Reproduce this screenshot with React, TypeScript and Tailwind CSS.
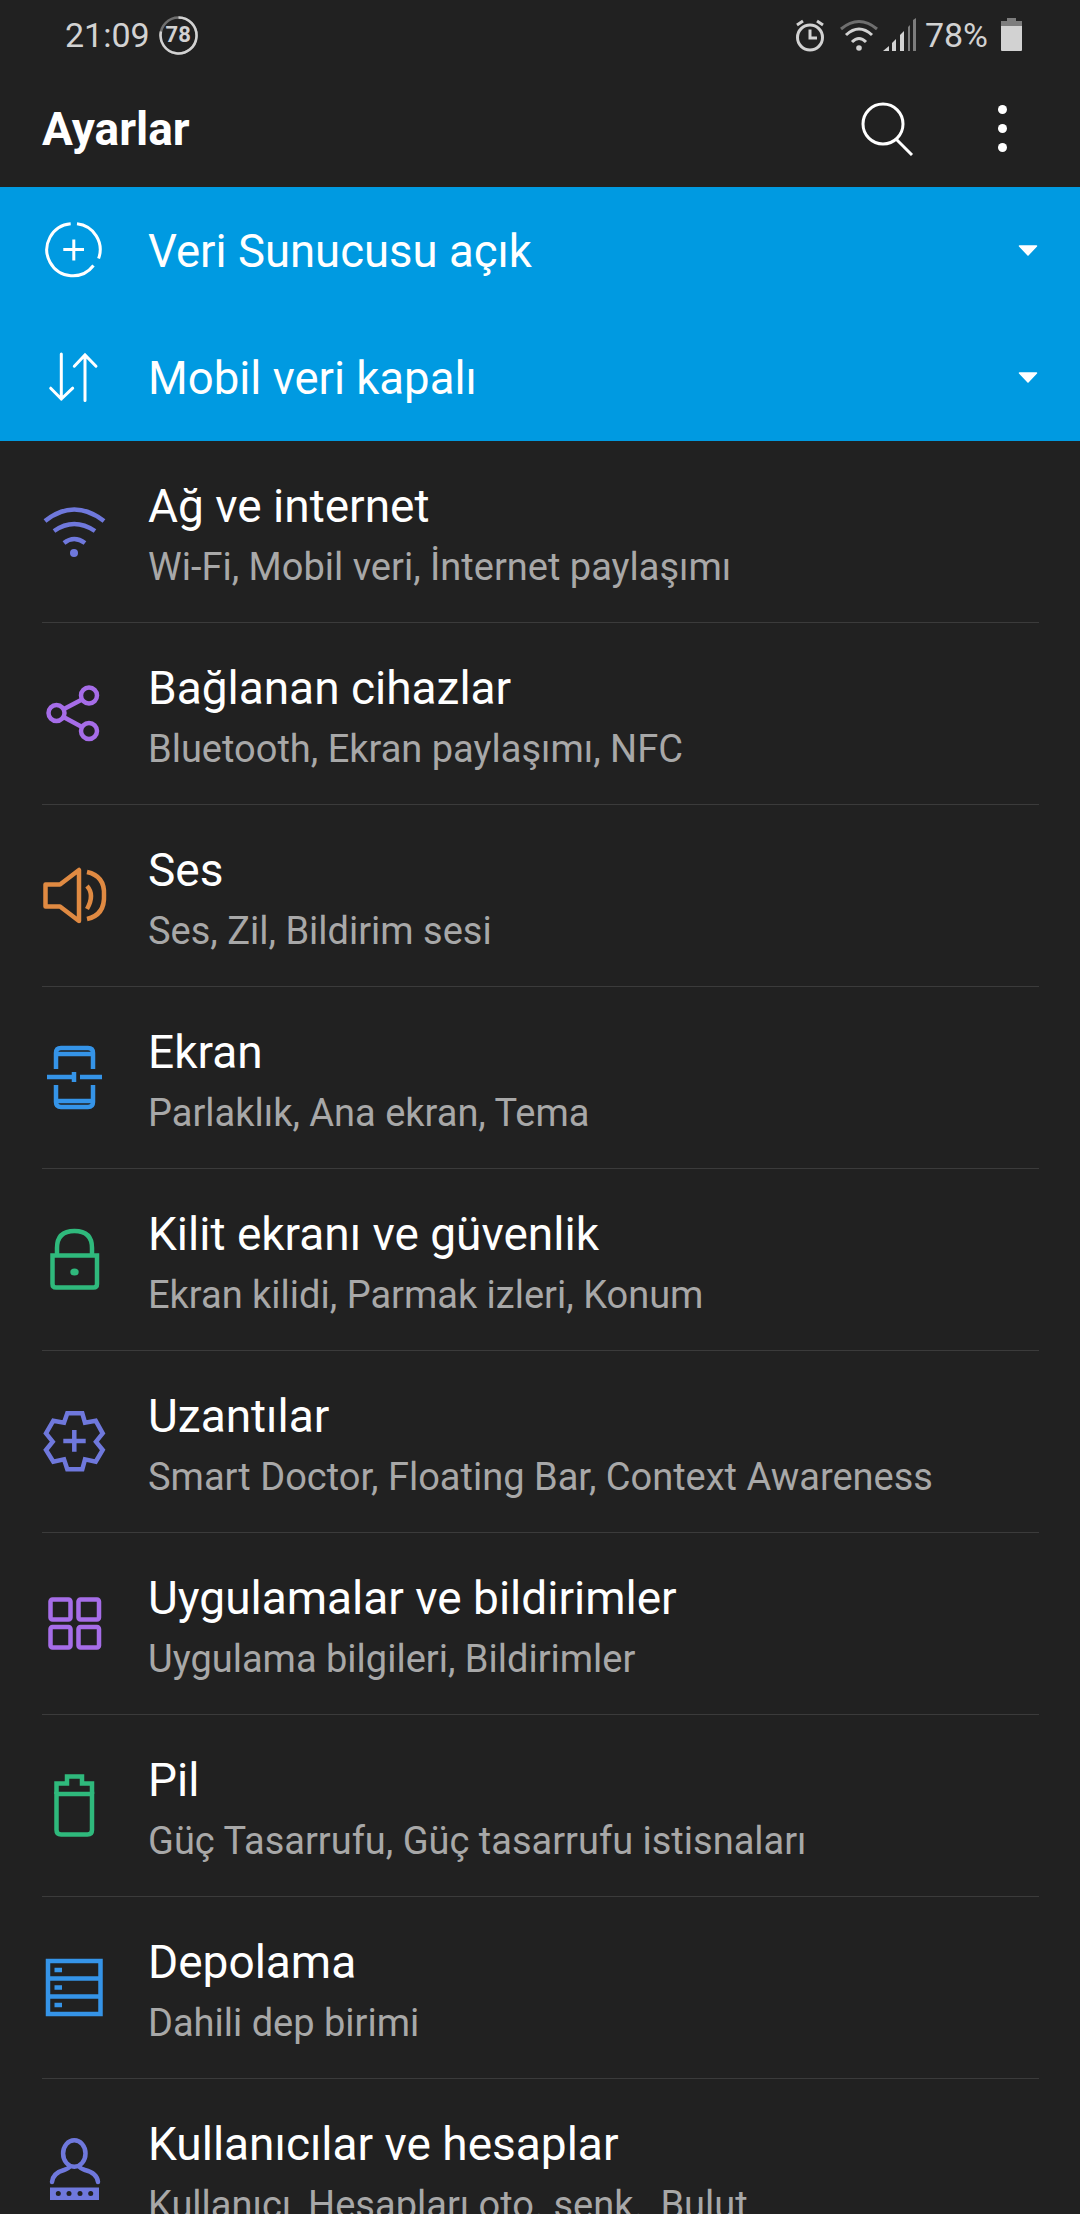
import type { ReactNode } from "react";

const iconProps = {
  width: 78,
  height: 78,
  viewBox: "0 0 78 78",
  fill: "none",
  strokeWidth: 4.5,
};

const WifiIcon = () => (
  <svg {...iconProps} stroke="#6f78dc">
    <path d="M10 28Q39 5 69 28" />
    <path d="M19 38Q39 24 60 38" />
    <path d="M29 50Q39 42 50 50" />
    <circle cx="39" cy="60" r="4" fill="#6f78dc" stroke="none" />
  </svg>
);

const ShareIcon = () => (
  <svg {...iconProps} stroke="#a66de8">
    <circle cx="54" cy="20.5" r="8" />
    <circle cx="21.5" cy="38" r="8" />
    <circle cx="54" cy="56" r="8" />
    <path d="M28.5 34.2L47 24.5M28.5 42L47 52" />
  </svg>
);

const SoundIcon = () => (
  <svg {...iconProps} stroke="#e08a42">
    <path d="M10.5 27.5H25L44 13V64L25 49.5H10.5Z" strokeLinejoin="round" />
    <path d="M52 29Q60 38 52 52" />
    <path d="M52 15Q70 19 69 38Q70 58 52 62" />
  </svg>
);

const ScreenIcon = () => (
  <svg {...iconProps} stroke="#3594e8">
    <path d="M21 30V14Q21 9 26 9H53Q58 9 58 14V30" />
    <path d="M21 46V63Q21 68 26 68H53Q58 68 58 63V46" />
    <path d="M21 15H58M21 62H58" />
    <path d="M12 38H38M45 38H67" />
    <path d="M39 33V43" />
  </svg>
);

const LockIcon = () => (
  <svg {...iconProps} stroke="#2fb97c">
    <path d="M22 33V27Q22 10 39.5 10Q57 10 57 27V33" />
    <path d="M17.5 34.5H62V63Q62 66.5 58.5 66.5H21Q17.5 66.5 17.5 63Z" />
    <ellipse cx="39.5" cy="51" rx="4.2" ry="3.6" fill="#2fb97c" stroke="none" />
  </svg>
);

const GearIcon = () => (
  <svg {...iconProps} stroke="#6f78dc">
    <path d="M32.3 10.3H47.3L50 19.7L60.7 17.7L67.7 30.3L61 38.7L67.7 47L60.7 58.7L50 56.3L47.3 66.3H32.3L29 56.3L18.3 58.7L11 47L17.7 38.7L11 30.3L18.3 17.7L29 19.7Z" />
    <path d="M28.3 38H50.7M39.3 27V48.7" />
  </svg>
);

const AppsIcon = () => (
  <svg {...iconProps} stroke="#a66de8">
    <rect x="15.5" y="14.5" width="20" height="20" rx="2" />
    <rect x="43.5" y="14.5" width="20.5" height="20" rx="2" />
    <rect x="15.5" y="42" width="20" height="20.5" rx="2" />
    <rect x="43.5" y="42" width="20.5" height="20.5" rx="2" />
  </svg>
);

const BatteryIcon = () => (
  <svg {...iconProps} stroke="#2fb97c">
    <path d="M21.5 27V16.5H32V9.5H47V16.5H57V27" />
    <path d="M21.5 27H57V63Q57 67.5 52.5 67.5H26Q21.5 67.5 21.5 63Z" />
  </svg>
);

const StorageIcon = () => (
  <svg {...iconProps} stroke="#3594e8">
    <rect x="13" y="12" width="52.5" height="53" />
    <path d="M13 29.5H65.5M13 47.5H65.5" />
    <path d="M19.5 21H27M19.5 38.5H27M19.5 56H27" />
  </svg>
);

const UserIcon = () => (
  <svg {...iconProps} stroke="#6f78dc">
    <ellipse cx="39.3" cy="22.5" rx="11.2" ry="13.2" />
    <path d="M17 51Q18 42 29 39Q34 37.5 35 35M63 51Q62 42 50 39Q45 37.5 44 35" strokeLinecap="round" />
    <rect x="15" y="56.5" width="49" height="12.5" fill="#6f78dc" stroke="none" />
    <g fill="#212121" stroke="none">
      <circle cx="23.3" cy="62.5" r="2.5" />
      <circle cx="34" cy="62.5" r="2.5" />
      <circle cx="45" cy="62.5" r="2.5" />
      <circle cx="55.7" cy="62.5" r="2.5" />
    </g>
  </svg>
);

const DataSaverIcon = () => (
  <svg {...iconProps} stroke="#fff" strokeWidth="3">
    <path d="M42 11.8A26 26 0 0 1 63.6 46.5" />
    <path d="M58.5 53.5A26 26 0 1 1 35.7 11.8" />
    <path d="M28.3 37.5H49M38.8 27.5V48.5" />
  </svg>
);

const MobileDataIcon = () => (
  <svg {...iconProps} stroke="#fff" strokeWidth="3" strokeLinecap="round">
    <path d="M26.3 15V60M15.7 49.2L26.3 60L37.7 49.2" />
    <path d="M50 61.5V16M39.3 27.2L50 16L61 27.2" />
  </svg>
);

const Caret = () => (
  <svg width="20" height="11" viewBox="0 0 20 11" fill="#fff">
    <path d="M1.5 1H18.5L10 10Z" stroke="#fff" strokeWidth="1.5" strokeLinejoin="round" />
  </svg>
);

const AlarmIcon = () => (
  <svg width="30" height="34" viewBox="0 0 30 34" fill="none" stroke="#d2d2d2" strokeWidth="3">
    <circle cx="15" cy="19.5" r="12.5" />
    <path d="M15 11.5V20H22" />
    <path d="M2 7L8 3M28 7L22 3" strokeWidth="3" />
  </svg>
);

const StatusWifi = () => (
  <svg width="38" height="34" viewBox="0 0 38 34" fill="none" strokeWidth="3">
    <path d="M1 11Q19 -4 37 11" stroke="#6f6f6f" />
    <path d="M6 17Q19 5 32 17" stroke="#d2d2d2" />
    <path d="M12 24Q19 17 26 24" stroke="#d2d2d2" />
    <circle cx="19" cy="30" r="2.8" fill="#d2d2d2" stroke="none" />
  </svg>
);

const StatusSignal = () => (
  <svg width="34" height="34" viewBox="0 0 34 34">
    <path d="M0 33L6 28V33Z" fill="#d2d2d2" />
    <path d="M9 33V25L13 21V33Z" fill="#d2d2d2" />
    <path d="M17 33V17L21 13V33Z" fill="#d2d2d2" />
    <path d="M25 33V9L27 7V33Z" fill="#7d7d7d" />
    <path d="M30 33V2L33 0V33Z" fill="#7d7d7d" />
  </svg>
);

const StatusBattery = () => (
  <svg width="22" height="34" viewBox="0 0 22 34">
    <path d="M6 0H15V3H21V8H0V3H6Z" fill="#7d7d7d" />
    <path d="M0 8H21V32Q21 33 20 33H1Q0 33 0 32Z" fill="#d2d2d2" />
  </svg>
);

const LevelBadge = () => (
  <div className="relative flex h-[39px] w-[39px] items-center justify-center">
    <svg className="absolute inset-0" width="39" height="39" viewBox="0 0 39 39" fill="none" strokeWidth="2.5">
      <circle cx="19.5" cy="19.5" r="18" stroke="#6f6f6f" />
      <path d="M19.5 1.5A18 18 0 1 1 2 15.5" stroke="#d2d2d2" />
    </svg>
    <span className="text-[22px] font-bold leading-none text-[#d2d2d2]">78</span>
  </div>
);

const settings: { title: string; subtitle: string; icon: ReactNode }[] = [
  { title: "Ağ ve internet", subtitle: "Wi-Fi, Mobil veri, İnternet paylaşımı", icon: <WifiIcon /> },
  { title: "Bağlanan cihazlar", subtitle: "Bluetooth, Ekran paylaşımı, NFC", icon: <ShareIcon /> },
  { title: "Ses", subtitle: "Ses, Zil, Bildirim sesi", icon: <SoundIcon /> },
  { title: "Ekran", subtitle: "Parlaklık, Ana ekran, Tema", icon: <ScreenIcon /> },
  { title: "Kilit ekranı ve güvenlik", subtitle: "Ekran kilidi, Parmak izleri, Konum", icon: <LockIcon /> },
  { title: "Uzantılar", subtitle: "Smart Doctor, Floating Bar, Context Awareness", icon: <GearIcon /> },
  { title: "Uygulamalar ve bildirimler", subtitle: "Uygulama bilgileri, Bildirimler", icon: <AppsIcon /> },
  { title: "Pil", subtitle: "Güç Tasarrufu, Güç tasarrufu istisnaları", icon: <BatteryIcon /> },
  { title: "Depolama", subtitle: "Dahili dep birimi", icon: <StorageIcon /> },
  { title: "Kullanıcılar ve hesaplar", subtitle: "Kullanıcı, Hesapları oto. senk., Bulut", icon: <UserIcon /> },
];

export default function App() {
  return (
    <div className="h-[2214px] w-[1080px] overflow-hidden bg-[#212121] font-['Roboto',sans-serif] text-white">
      {/* Status bar */}
      <div className="flex h-[70px] items-center justify-between pl-[65px] pr-[57px] text-[#d2d2d2]">
        <div className="flex items-center gap-[9px]">
          <span className="text-[34px] leading-none">21:09</span>
          <LevelBadge />
        </div>
        <div className="flex items-center">
          <AlarmIcon />
          <div className="ml-[15px]">
            <StatusWifi />
          </div>
          <div className="ml-[5px]">
            <StatusSignal />
          </div>
          <span className="ml-[8px] text-[34px] leading-none">78%</span>
          <div className="ml-[13px]">
            <StatusBattery />
          </div>
        </div>
      </div>

      {/* Header */}
      <div className="flex h-[117px] items-center justify-between pl-[42px] pr-[73px]">
        <h1 className="text-[46px] font-bold leading-none">Ayarlar</h1>
        <div className="flex items-center gap-[84px]">
          <svg width="54" height="54" viewBox="0 0 54 54" fill="none" stroke="#fff" strokeWidth="3">
            <circle cx="23" cy="22" r="20" />
            <path d="M36 37L52 53" />
          </svg>
          <div className="flex flex-col gap-[10px]">
            <div className="h-[9px] w-[9px] rounded-full bg-white" />
            <div className="h-[9px] w-[9px] rounded-full bg-white" />
            <div className="h-[9px] w-[9px] rounded-full bg-white" />
          </div>
        </div>
      </div>

      {/* Condition banners */}
      <div className="bg-[#009ae1]">
        <div className="flex h-[127px] items-center pl-[35px] pr-[42px]">
          <DataSaverIcon />
          <span className="ml-[35px] flex-1 pt-[4px] text-[45.5px]">Veri Sunucusu açık</span>
          <Caret />
        </div>
        <div className="flex h-[127px] items-center pl-[35px] pr-[42px]">
          <MobileDataIcon />
          <span className="ml-[35px] flex-1 pt-[4px] text-[45.5px]">Mobil veri kapalı</span>
          <Caret />
        </div>
      </div>

      {/* Settings list */}
      <div>
        {settings.map((item) => (
          <div key={item.title} className="ml-[42px] mr-[41px] flex h-[182px] border-b border-[#3b3b3b]">
            <div className="-ml-[7px] mt-[52px] h-[78px] w-[78px]">{item.icon}</div>
            <div className="ml-[35px] pt-[40px]">
              <div className="text-[46px] leading-[50px]">{item.title}</div>
              <div className="mt-[13px] text-[38px] leading-[46px] text-[#a8a8a8]">{item.subtitle}</div>
            </div>
          </div>
        ))}
      </div>
    </div>
  );
}
